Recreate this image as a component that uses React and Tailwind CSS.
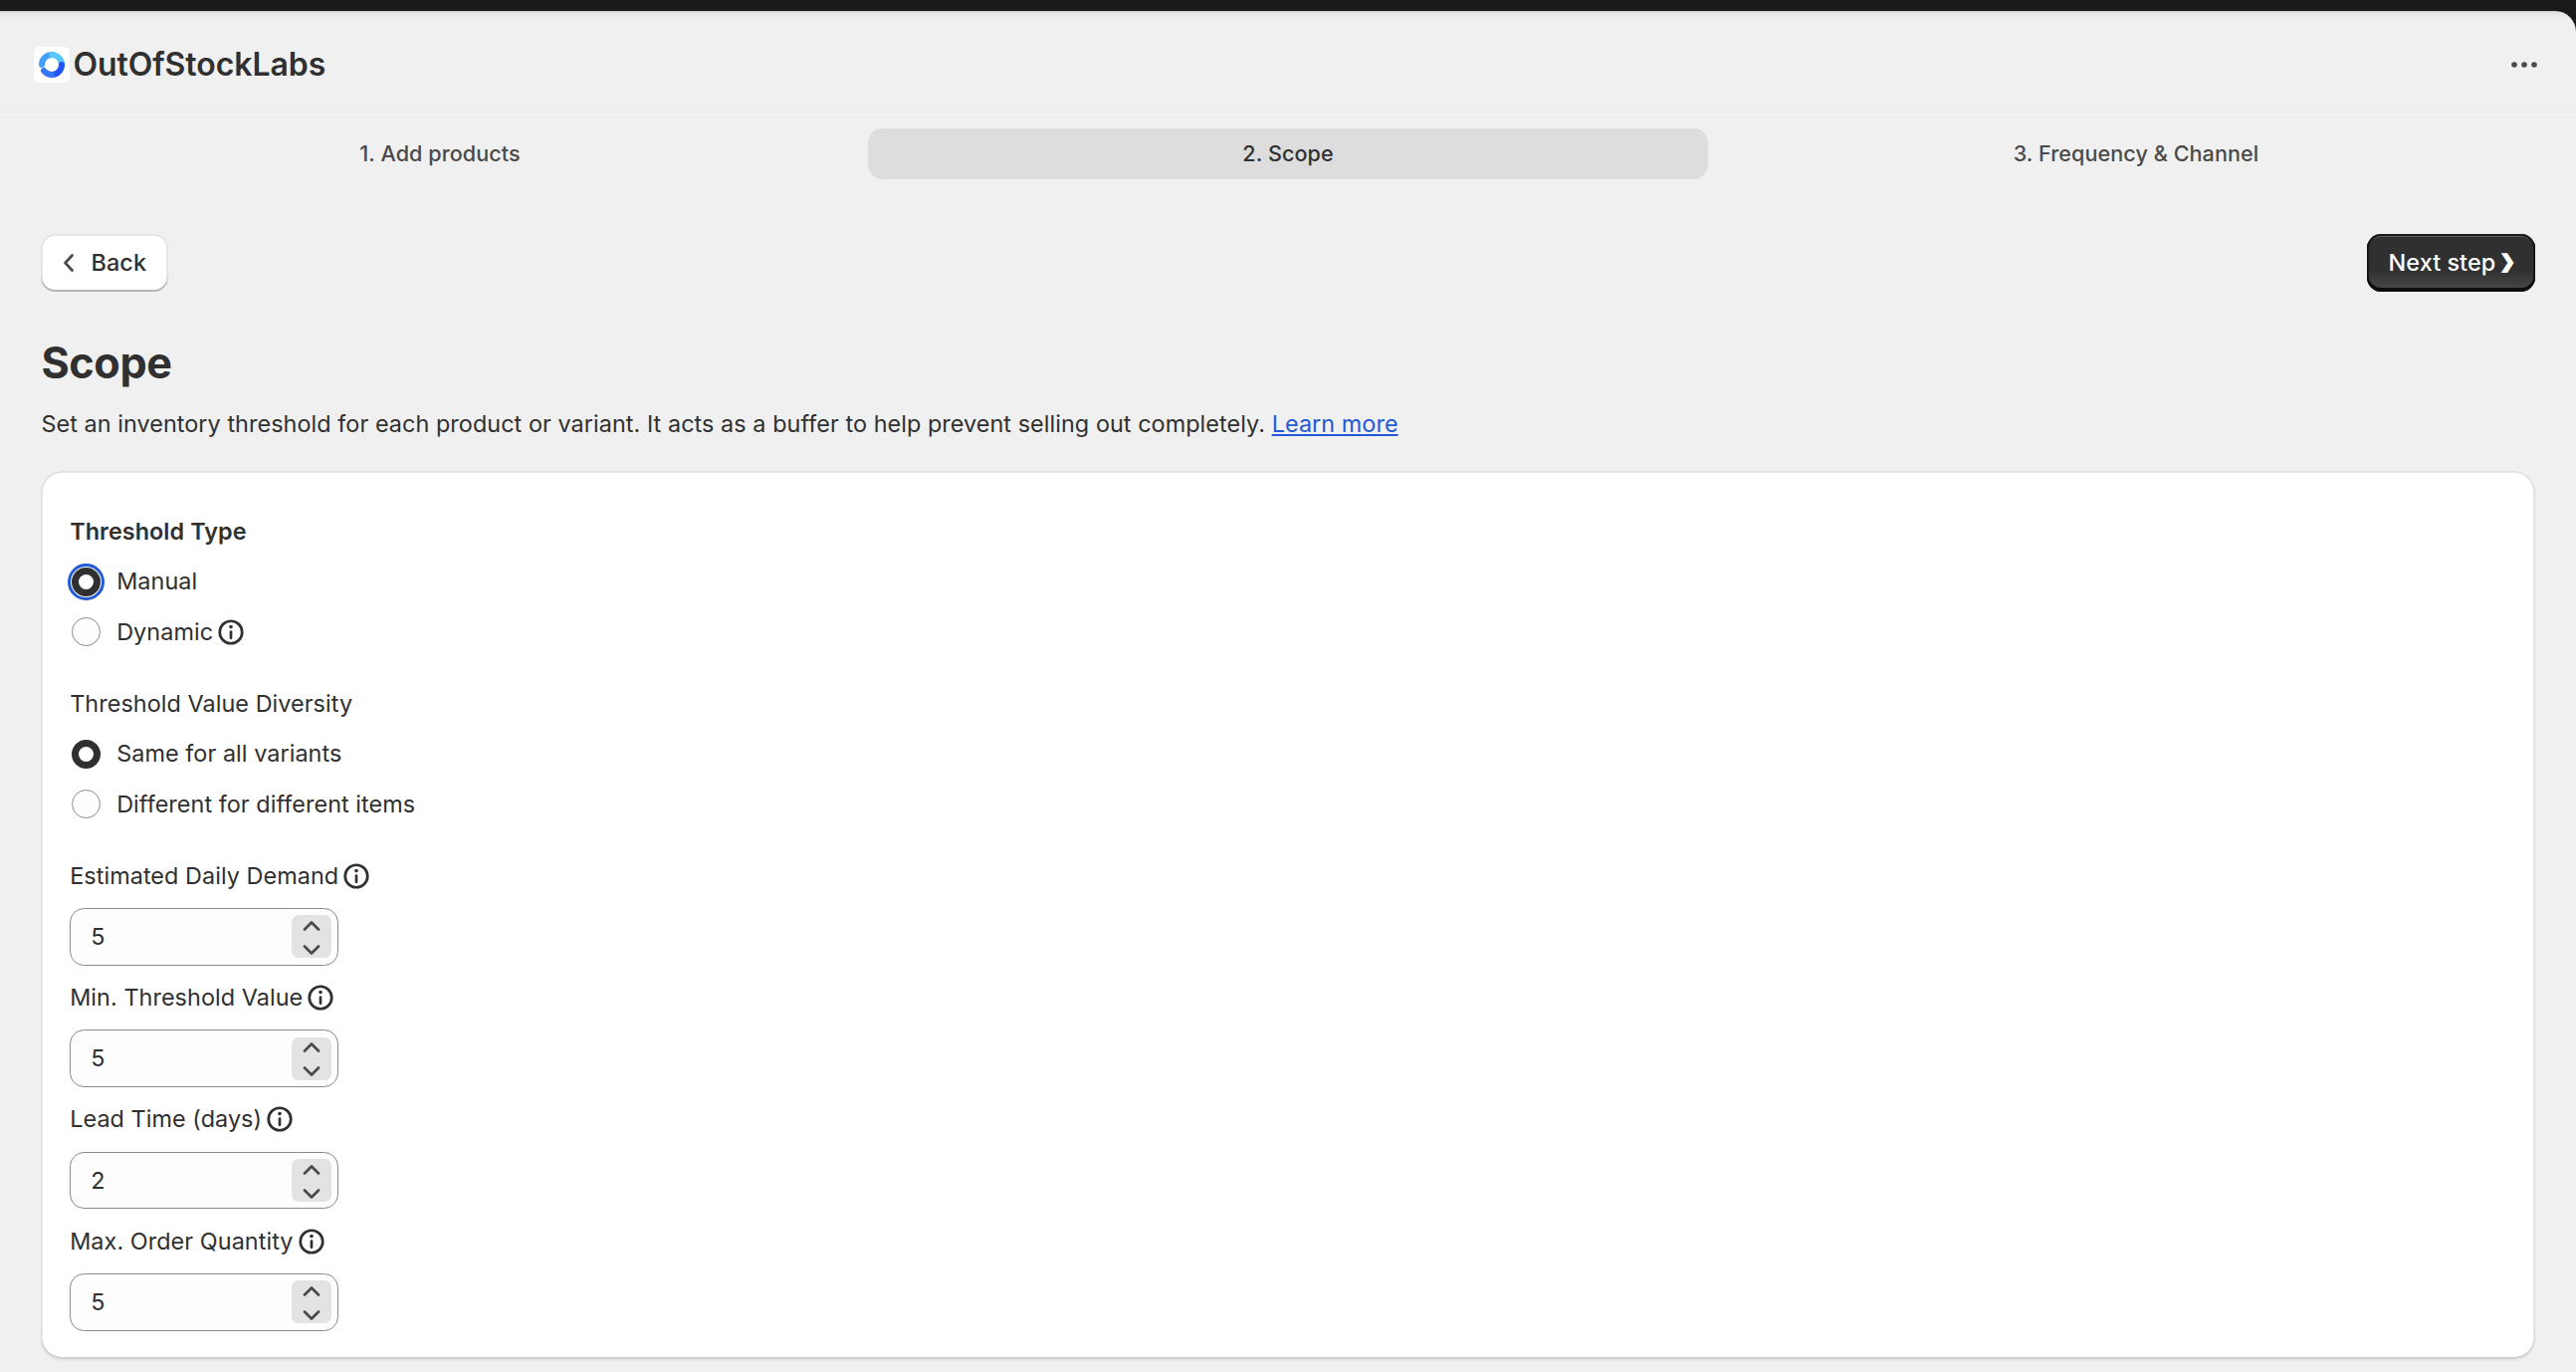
import { useState } from 'react';

const steps = ['1. Add products', '2. Scope', '3. Frequency & Channel'];

const fields = [
  { id: 'demand', label: 'Estimated Daily Demand', value: 5 },
  { id: 'min', label: 'Min. Threshold Value', value: 5 },
  { id: 'lead', label: 'Lead Time (days)', value: 2 },
  { id: 'max', label: 'Max. Order Quantity', value: 5 },
];

const InfoIcon = () => (
  <svg viewBox="0 0 20 20" className="size-9 shrink-0" fill="none">
    <circle cx="10" cy="10" r="6.25" stroke="#303030" strokeWidth="1.5" />
    <path d="M10 9.75v3.5" stroke="#303030" strokeWidth="1.5" strokeLinecap="round" />
    <circle cx="10" cy="7" r="1" fill="#303030" />
  </svg>
);

const Logo = () => (
  <svg viewBox="0 0 36 36" className="mt-px size-9 rounded-md bg-white" fill="none" strokeWidth="6" strokeLinecap="round">
    <path d="M8 18A10 10 0 0 1 18 8" stroke="#46a0fa" />
    <path d="M18 8a10 10 0 0 1 10 10" stroke="#5ac8fa" />
    <path d="M28 18a10 10 0 0 1-10 10" stroke="#2054f5" />
    <path d="M18 28a10 10 0 0 1-8-4" stroke="#3478f6" />
  </svg>
);

const Radio = ({ label, checked, focused, info, onChange }) => (
  <label className="flex h-9 items-center pl-[1.8px]">
    <span
      className={`flex size-[28.8px] shrink-0 items-center justify-center rounded-full ${
        checked ? 'bg-[#303030]' : 'border border-[#8a8a8a] bg-[#fdfdfd]'
      } ${focused ? 'outline-[3px] outline-offset-1 outline-[#2159d6]' : ''}`}
    >
      {checked && <span className="size-[15px] rounded-full bg-white" />}
    </span>
    <input type="radio" className="sr-only" checked={checked} onChange={onChange} />
    <span className="ml-[16.4px]">{label}</span>
    {info && <InfoIcon />}
  </label>
);

const NumberField = ({ label, value, onChange }) => (
  <div className="flex flex-col gap-[14.4px]">
    <div className="flex items-center">
      <span>{label}</span>
      <InfoIcon />
    </div>
    <div className="flex h-[57.6px] w-[270px] items-center justify-between rounded-[14.4px] border border-[#8a8a8a] bg-[#fdfdfd] pr-1.5 pl-[20px]">
      <span>{value}</span>
      <div className="flex h-[43px] w-10 flex-col items-center justify-between rounded-[7px] bg-[#e3e3e3] pt-[5.5px] pb-[3.5px]">
        <button onClick={() => onChange(value + 1)}>
          <svg viewBox="0 0 18 10" className="block h-2.5 w-[18px]" fill="none" stroke="#4a4a4a" strokeWidth="2.7" strokeLinecap="round" strokeLinejoin="round">
            <path d="M2 8.5l7-7 7 7" />
          </svg>
        </button>
        <button onClick={() => onChange(value - 1)}>
          <svg viewBox="0 0 18 10" className="block h-2.5 w-[18px]" fill="none" stroke="#4a4a4a" strokeWidth="2.7" strokeLinecap="round" strokeLinejoin="round">
            <path d="M2 1.5l7 7 7-7" />
          </svg>
        </button>
      </div>
    </div>
  </div>
);

const App = () => {
  const [type, setType] = useState('manual');
  const [diversity, setDiversity] = useState('same');
  const [values, setValues] = useState(fields.map((f) => f.value));

  return (
    <div className="h-[1378px] overflow-hidden bg-[#1a1a1a] pt-[11px] font-['Inter',sans-serif] text-[23.4px] leading-9 tracking-[0.057px] text-[#303030]">
      <div className="h-full rounded-tr-[21px] bg-[#f0f0f0] bg-[linear-gradient(180deg,#c8c8c8_0,#e6e6e6_2px,#f0f0f0_8px)]">

        {/* App header */}
        <header className="flex h-[102px] items-center justify-between border-b border-[#e8e8e8] pt-1.5 pr-[39px] pl-[34px]">
          <div className="flex items-center gap-[3.4px]">
            <Logo />
            <h1 className="text-[32px] font-semibold tracking-[-0.06px]">OutOfStockLabs</h1>
          </div>
          <svg viewBox="0 0 26 6" className="h-1.5 w-[26px]" fill="#4a4a4a">
            <circle cx="3" cy="3" r="2.8" />
            <circle cx="13" cy="3" r="2.8" />
            <circle cx="23" cy="3" r="2.8" />
          </svg>
        </header>

        {/* Steps */}
        <nav className="flex gap-2 px-5 pt-4">
          {steps.map((step, i) => (
            <div
              key={step}
              className={`flex h-[51px] flex-1 items-center justify-center rounded-[14.4px] pb-0.5 text-[21.6px] font-medium ${
                i === 1 ? 'bg-[#dddddd] text-[#303030]' : 'text-[#4a4a4a]'
              }`}
            >
              {step}
            </div>
          ))}
        </nav>

        <main className="px-[41.4px] pt-[55px]">
          <div className="flex items-center justify-between">
            <button className="flex h-[58px] w-[127.6px] items-center rounded-[14.4px] bg-white pl-[22px] font-medium shadow-[inset_0_-2px_0_#b5b5b5,inset_0_0_0_1.8px_#e3e3e3]">
              <svg viewBox="0 0 12 20" className="h-5 w-3" fill="none" stroke="#4a4a4a" strokeWidth="2.7" strokeLinecap="round" strokeLinejoin="round">
                <path d="M9.5 2.5L2.5 10l7 7.5" />
              </svg>
              <span className="ml-[16.2px]">Back</span>
            </button>
            <button className="flex h-[58px] w-[169px] items-center gap-[4.5px] rounded-[14.4px] bg-[linear-gradient(180deg,#303030_63%,#4a4a4a_100%)] pl-[22px] font-medium whitespace-nowrap text-white shadow-[inset_0_-3px_0_1px_#0d0d0d,inset_0_0_0_2px_#1a1a1a,inset_0_3px_0_#5e5e5e]">
              <span>Next step</span>
              <span className="pb-[3px] font-['DejaVu_Sans',sans-serif] text-[18px] font-bold [-webkit-text-stroke:1.8px_white]">❯</span>
            </button>
          </div>

          <h2 className="mt-[44px] text-[43.2px] leading-[54px] font-bold tracking-[-0.36px]">Scope</h2>
          <p className="mt-[17px]">
            Set an inventory threshold for each product or variant. It acts as a buffer to help prevent selling out completely.{' '}
            <a href="#" className="text-[#2159d6] underline decoration-2 underline-offset-2">Learn more</a>
          </p>

          {/* Threshold settings */}
          <section className="mt-[29px] flex h-[892px] flex-col gap-9 rounded-[21.6px] bg-white px-[28.8px] pt-[43px] shadow-[0_2px_2px_rgba(0,0,0,0.05),inset_0_-2px_0_#d0d0d0,inset_0_0_0_1.8px_#e0e0e0]">
            <div className="flex flex-col gap-[14.4px]">
              <h3 className="font-semibold">Threshold Type</h3>
              <Radio label="Manual" focused checked={type === 'manual'} onChange={() => setType('manual')} />
              <Radio label="Dynamic" info checked={type === 'dynamic'} onChange={() => setType('dynamic')} />
            </div>
            <div className="flex flex-col gap-[14.4px]">
              <h3>Threshold Value Diversity</h3>
              <Radio label="Same for all variants" checked={diversity === 'same'} onChange={() => setDiversity('same')} />
              <Radio label="Different for different items" checked={diversity === 'different'} onChange={() => setDiversity('different')} />
            </div>
            <div className="flex flex-col gap-[14.4px]">
              {fields.map((field, i) => (
                <NumberField
                  key={field.id}
                  label={field.label}
                  value={values[i]}
                  onChange={(v) => setValues(values.map((old, j) => (j === i ? v : old)))}
                />
              ))}
            </div>
          </section>
        </main>
      </div>
    </div>
  );
};

export default App;
